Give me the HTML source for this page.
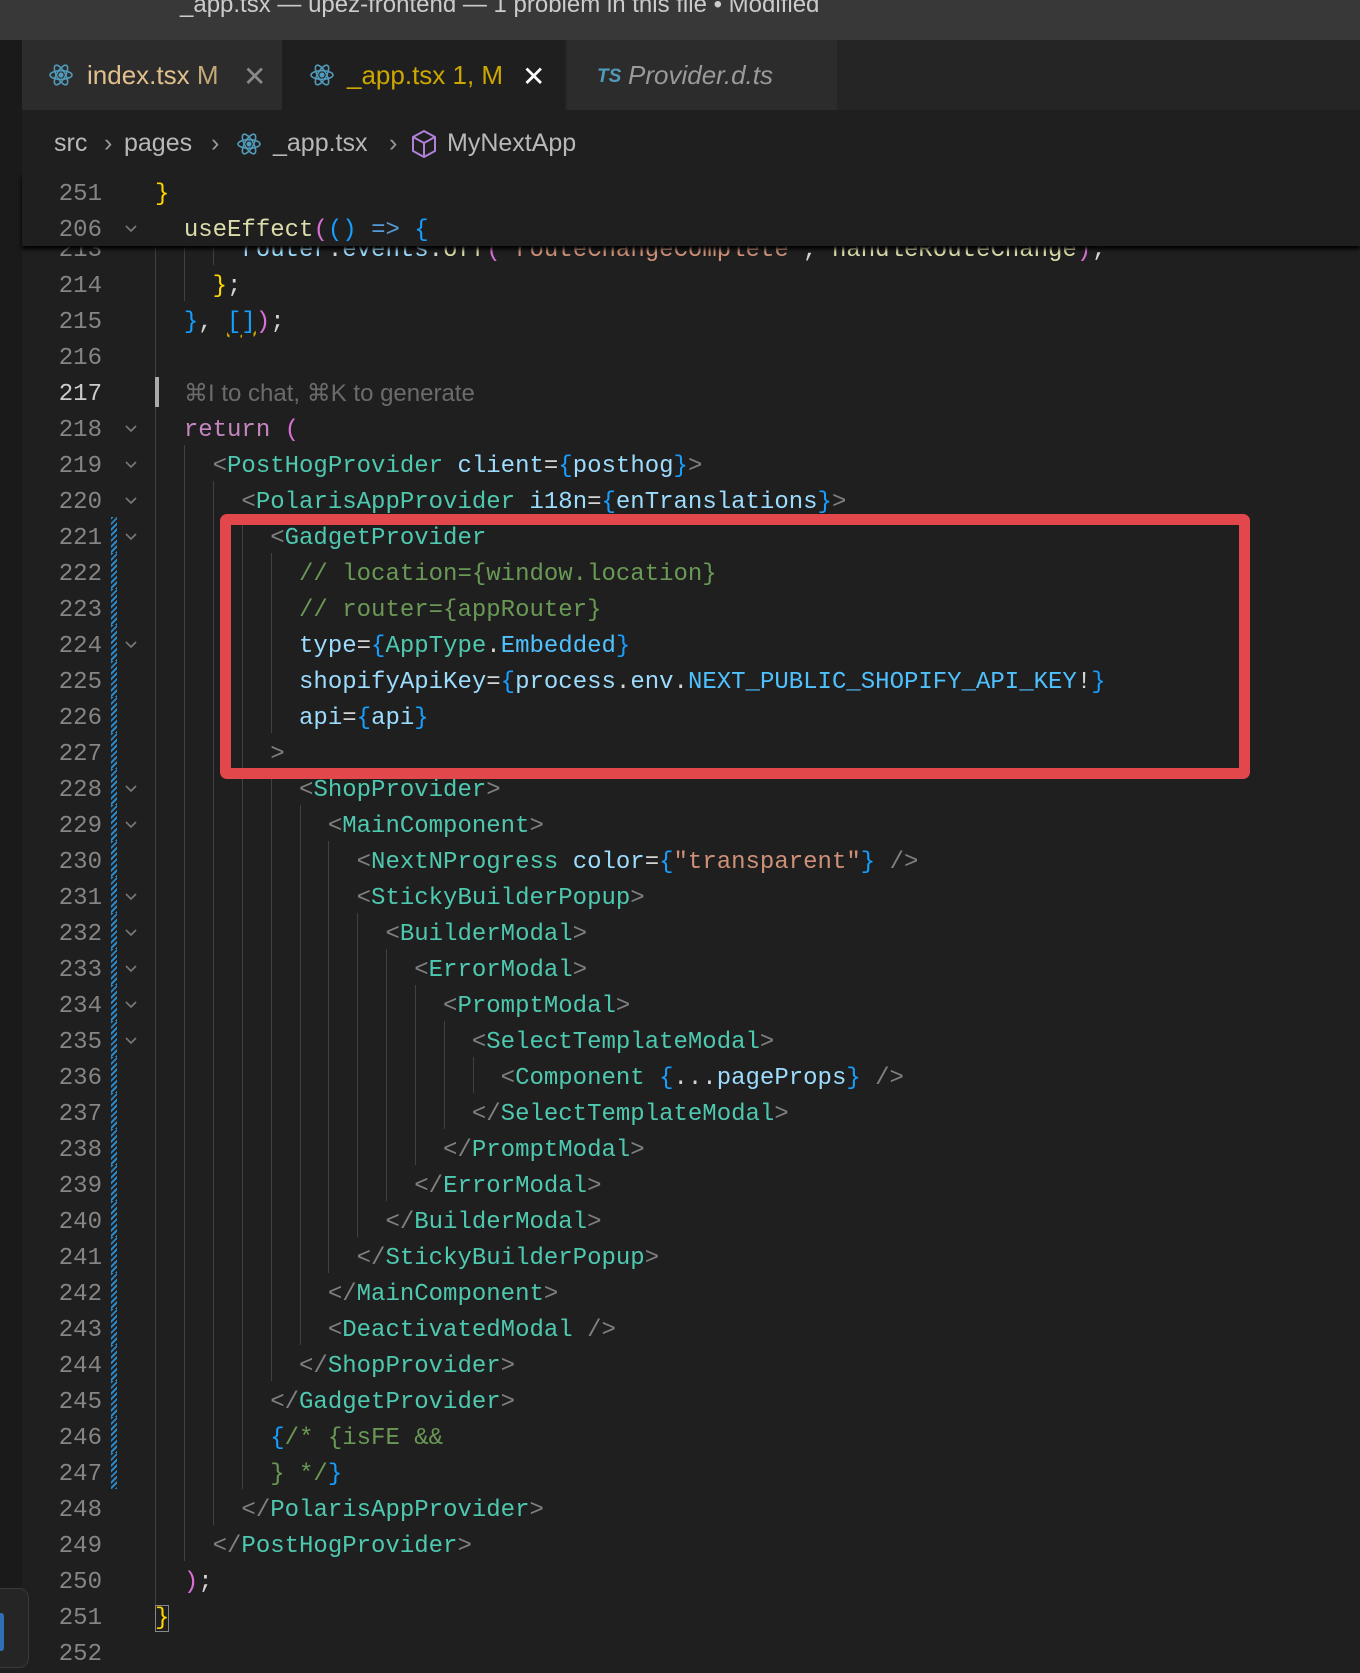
<!DOCTYPE html>
<html><head><meta charset="utf-8"><style>
*{margin:0;padding:0;box-sizing:border-box}
body{width:1360px;height:1656px;background:#1f1f1f;overflow:hidden;position:relative;font-family:"Liberation Sans",sans-serif}
.abs{position:absolute}
.ln{position:absolute;left:0;width:102px;text-align:right;font:24px/36px "Liberation Mono",monospace;color:#858585;padding-top:4px}
.cd{position:absolute;left:155px;font:24px/36px "Liberation Mono",monospace;white-space:pre;color:#d4d4d4;padding-top:4px}
.g{position:absolute;width:1px;height:36px;background:#404040}
.t{color:#4ec9b0}.p{color:#808080}.a{color:#9cdcfe}.b{color:#179fff}.w{color:#d4d4d4}.c{color:#6a9955}.k{color:#c586c0}.y{color:#ffd700}.m{color:#da70d6}.s{color:#ce9178}.e{color:#4fc1ff}.f{color:#dcdcaa}.o{color:#569cd6}
.bc{position:absolute;top:129px;font-size:25px;color:#b8b8b8;white-space:pre}
</style></head><body>
<div class="abs" style="left:0;top:0;width:1360px;height:40px;background:#383838"></div>
<div class="abs" style="left:180px;top:-9px;font-size:24px;color:#cccccc;white-space:pre">_app.tsx — upez-frontend — 1 problem in this file • Modified</div>
<div class="abs" style="left:0;top:40px;width:22px;height:1616px;background:#1a1a1a"></div>
<div class="abs" style="left:22px;top:40px;width:1338px;height:70px;background:#252525"></div>
<div class="abs" style="left:22px;top:40px;width:260px;height:70px;background:#2c2c2c"></div>
<div class="abs" style="left:282px;top:40px;width:283px;height:70px;background:#1f1f1f"></div>
<div class="abs" style="left:565px;top:40px;width:272px;height:70px;background:#2c2c2c;border-left:2px solid #252525"></div>
<svg class="abs" style="left:48px;top:62px" width="26" height="26" viewBox="0 0 26 26" fill="none" stroke="#519aba" stroke-width="1.6"><ellipse cx="13" cy="13" rx="11" ry="4.3"/><ellipse cx="13" cy="13" rx="11" ry="4.3" transform="rotate(60 13 13)"/><ellipse cx="13" cy="13" rx="11" ry="4.3" transform="rotate(120 13 13)"/><circle cx="13" cy="13" r="1.8" fill="#519aba"/></svg>
<div class="abs" style="left:87px;top:60px;font-size:26px;color:#e2c08d;white-space:pre">index.tsx <b style="color:#c4a877;font-weight:normal">M</b></div>
<div class="abs" style="left:243px;top:60px;font-size:28px;color:#8a8a8a">✕</div>
<svg class="abs" style="left:309px;top:62px" width="26" height="26" viewBox="0 0 26 26" fill="none" stroke="#519aba" stroke-width="1.6"><ellipse cx="13" cy="13" rx="11" ry="4.3"/><ellipse cx="13" cy="13" rx="11" ry="4.3" transform="rotate(60 13 13)"/><ellipse cx="13" cy="13" rx="11" ry="4.3" transform="rotate(120 13 13)"/><circle cx="13" cy="13" r="1.8" fill="#519aba"/></svg>
<div class="abs" style="left:347px;top:60px;font-size:26px;color:#cca700;white-space:pre">_app.tsx 1, M</div>
<div class="abs" style="left:522px;top:60px;font-size:28px;color:#ffffff">✕</div>
<div class="abs" style="left:597px;top:66px;font-size:19px;font-weight:bold;font-style:italic;color:#519aba">TS</div>
<div class="abs" style="left:628px;top:60px;font-size:26px;font-style:italic;color:#9a9a9a">Provider.d.ts</div>

<div class="bc" style="left:54px">src</div>
<div class="bc" style="left:104px;color:#999">›</div>
<div class="bc" style="left:124px">pages</div>
<div class="bc" style="left:211px;color:#999">›</div>
<svg class="abs" style="left:236px;top:131px" width="26" height="26" viewBox="0 0 26 26" fill="none" stroke="#519aba" stroke-width="1.6"><ellipse cx="13" cy="13" rx="11" ry="4.3"/><ellipse cx="13" cy="13" rx="11" ry="4.3" transform="rotate(60 13 13)"/><ellipse cx="13" cy="13" rx="11" ry="4.3" transform="rotate(120 13 13)"/><circle cx="13" cy="13" r="1.8" fill="#519aba"/></svg>
<div class="bc" style="left:273px">_app.tsx</div>
<div class="bc" style="left:389px;color:#999">›</div>
<svg class="abs" style="left:411px;top:129px" width="26" height="30" viewBox="0 0 26 30" fill="none" stroke="#b180d7" stroke-width="2" stroke-linejoin="round"><path d="M13 2 L24 8 L24 22 L13 28 L2 22 L2 8 Z M2 8 L13 14 L24 8 M13 14 L13 28"/></svg>
<div class="bc" style="left:447px">MyNextApp</div>

<div id="code"></div>

<div class="abs" style="left:22px;top:173px;width:1338px;height:73px;background:#1f1f1f;box-shadow:0 3px 4px #000"></div>
<div class="ln" style="top:173px">251</div><div class="cd" style="top:173px"><span class="y">}</span></div>
<div class="ln" style="top:209px">206</div><div class="cd" style="top:209px">  <span class="f">useEffect</span><span class="m">(</span><span class="b">()</span> <span class="o">=&gt;</span> <span class="b">{</span></div>
<svg class="abs" style="left:124px;top:223px" width="14" height="12" viewBox="0 0 14 12"><path d="M2 3 L7 8 L12 3" stroke="#7a7a7a" stroke-width="1.6" fill="none"/></svg>

<div class="abs" style="left:220px;top:514px;width:1030px;height:265px;border:11px solid #e2474c;border-radius:7px"></div>
<div class="abs" style="left:-10px;top:1588px;width:39px;height:80px;background:#252526;border:1px solid #3a3a3a;border-radius:10px"></div>
<div class="abs" style="left:0;top:1613px;width:4px;height:38px;background:#2f6fb5;border-radius:0 3px 3px 0"></div>

<script>
const L=[
[213,6,'<span class="a">router</span>.<span class="a">events</span>.<span class="f">off</span><span class="m">(</span><span class="s">"routeChangeComplete"</span>, <span class="f">handleRouteChange</span><span class="m">)</span>;'],
[214,4,'<span class="y">}</span>;'],
[215,2,'<span class="b">}</span>, <span class="b" style="text-decoration:underline wavy #cca700">[]</span><span class="m">)</span>;'],
[216,2,''],
[217,2,'HINT'],
[218,2,'<span class="k">return</span> <span class="m">(</span>',1],
[219,4,'<span class="p">&lt;</span><span class="t">PostHogProvider</span> <span class="a">client</span>=<span class="b">{</span><span class="a">posthog</span><span class="b">}</span><span class="p">&gt;</span>',1],
[220,6,'<span class="p">&lt;</span><span class="t">PolarisAppProvider</span> <span class="a">i18n</span>=<span class="b">{</span><span class="a">enTranslations</span><span class="b">}</span><span class="p">&gt;</span>',1],
[221,8,'<span class="p">&lt;</span><span class="t">GadgetProvider</span>',1],
[222,10,'<span class="c">// location={window.location}</span>'],
[223,10,'<span class="c">// router={appRouter}</span>'],
[224,10,'<span class="a">type</span>=<span class="b">{</span><span class="t">AppType</span>.<span class="e">Embedded</span><span class="b">}</span>',1],
[225,10,'<span class="a">shopifyApiKey</span>=<span class="b">{</span><span class="a">process</span>.<span class="a">env</span>.<span class="e">NEXT_PUBLIC_SHOPIFY_API_KEY</span>!<span class="b">}</span>'],
[226,10,'<span class="a">api</span>=<span class="b">{</span><span class="a">api</span><span class="b">}</span>'],
[227,8,'<span class="p">&gt;</span>'],
[228,10,'<span class="p">&lt;</span><span class="t">ShopProvider</span><span class="p">&gt;</span>',1],
[229,12,'<span class="p">&lt;</span><span class="t">MainComponent</span><span class="p">&gt;</span>',1],
[230,14,'<span class="p">&lt;</span><span class="t">NextNProgress</span> <span class="a">color</span>=<span class="b">{</span><span class="s">"transparent"</span><span class="b">}</span> <span class="p">/&gt;</span>'],
[231,14,'<span class="p">&lt;</span><span class="t">StickyBuilderPopup</span><span class="p">&gt;</span>',1],
[232,16,'<span class="p">&lt;</span><span class="t">BuilderModal</span><span class="p">&gt;</span>',1],
[233,18,'<span class="p">&lt;</span><span class="t">ErrorModal</span><span class="p">&gt;</span>',1],
[234,20,'<span class="p">&lt;</span><span class="t">PromptModal</span><span class="p">&gt;</span>',1],
[235,22,'<span class="p">&lt;</span><span class="t">SelectTemplateModal</span><span class="p">&gt;</span>',1],
[236,24,'<span class="p">&lt;</span><span class="t">Component</span> <span class="b">{</span>...<span class="a">pageProps</span><span class="b">}</span> <span class="p">/&gt;</span>'],
[237,22,'<span class="p">&lt;/</span><span class="t">SelectTemplateModal</span><span class="p">&gt;</span>'],
[238,20,'<span class="p">&lt;/</span><span class="t">PromptModal</span><span class="p">&gt;</span>'],
[239,18,'<span class="p">&lt;/</span><span class="t">ErrorModal</span><span class="p">&gt;</span>'],
[240,16,'<span class="p">&lt;/</span><span class="t">BuilderModal</span><span class="p">&gt;</span>'],
[241,14,'<span class="p">&lt;/</span><span class="t">StickyBuilderPopup</span><span class="p">&gt;</span>'],
[242,12,'<span class="p">&lt;/</span><span class="t">MainComponent</span><span class="p">&gt;</span>'],
[243,12,'<span class="p">&lt;</span><span class="t">DeactivatedModal</span> <span class="p">/&gt;</span>'],
[244,10,'<span class="p">&lt;/</span><span class="t">ShopProvider</span><span class="p">&gt;</span>'],
[245,8,'<span class="p">&lt;/</span><span class="t">GadgetProvider</span><span class="p">&gt;</span>'],
[246,8,'<span class="b">{</span><span class="c">/* {isFE &amp;&amp;</span>'],
[247,8,'<span class="c">} */</span><span class="b">}</span>'],
[248,6,'<span class="p">&lt;/</span><span class="t">PolarisAppProvider</span><span class="p">&gt;</span>'],
[249,4,'<span class="p">&lt;/</span><span class="t">PostHogProvider</span><span class="p">&gt;</span>'],
[250,2,'<span class="m">)</span>;'],
[251,0,'<span class="y" style="outline:1px solid #888;outline-offset:-1px">}</span>'],
[252,0,'']
];
let h='';
for(const [n,ind,txt,fold] of L){
 const top=265+(n-214)*36;
 h+=`<div class="ln" style="top:${top}px;${n==217?'color:#cccccc':''}">${n}</div>`;
 let gi = ind; if(n==251) gi=2;
 for(let c=0;c<gi;c+=2){ if(n==252) break; h+=`<div class="g" style="left:${155+c*14.45}px;top:${top}px;${n==251?'height:30px':''}"></div>`;}
 if(txt==='HINT'){
  h+=`<div class="abs" style="left:155px;top:${top+4}px;width:4px;height:30px;background:#aaaaaa"></div>`;
  h+=`<div class="abs" style="left:184px;top:${top+6}px;font-size:24px;color:#6b6b6b;white-space:pre">⌘I to chat, ⌘K to generate</div>`;
 } else {
  h+=`<div class="cd" style="top:${top}px">${' '.repeat(ind)}${txt}</div>`;
 }
 if(fold) h+=`<svg class="abs" style="left:124px;top:${top+14}px" width="14" height="12" viewBox="0 0 14 12"><path d="M2 3 L7 8 L12 3" stroke="#7a7a7a" stroke-width="1.6" fill="none"/></svg>`;
 if(n>=221&&n<=247) h+=`<div class="abs" style="left:111px;top:${top}px;width:6px;height:36px;background:repeating-linear-gradient(135deg,#2b88c8 0 2px,transparent 2px 4px)"></div>`;
}
document.getElementById('code').innerHTML=h;
</script>
</body></html>
